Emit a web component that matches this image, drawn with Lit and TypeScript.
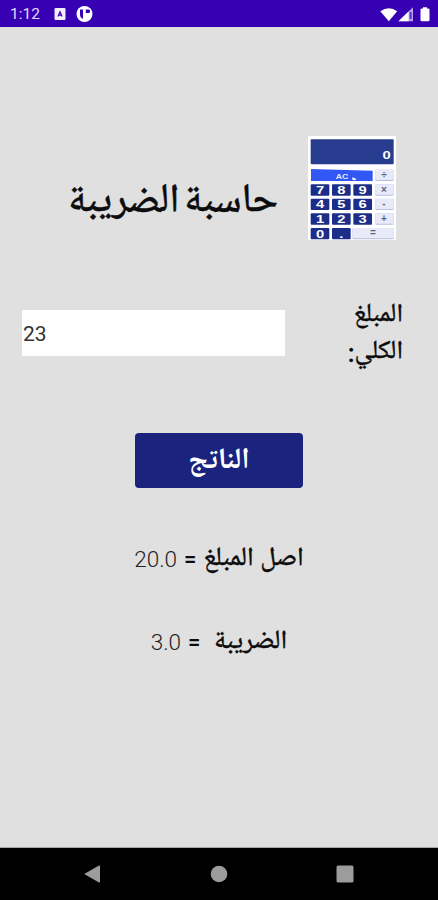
import { LitElement, html, svg, css } from "lit";
import { customElement, state } from "lit/decorators.js";

@customElement("status-bar")
class StatusBar extends LitElement {
  static styles = css`
    :host {
      display: flex;
      align-items: center;
      height: 27px;
      box-sizing: border-box;
      padding: 1px 6px 0 10px;
      background: #3700b3;
      color: #e6dcfa;
      font: 400 15.5px/27px Roboto, sans-serif;
    }
    .time { width: 44px; }
    .left { display: block; }
    .right { display: block; margin-left: auto; }
  `;
  render() {
    return html`
      <span class="time">1:12</span>
      <svg class="left" width="40" height="18" viewBox="0 0 40 18">
        <rect x="0.5" y="3" width="11" height="12" rx="1" fill="#f3eefc" />
        <path d="M4 11.4 6 6.8 8 11.4M4.6 10.2h2.8" fill="none" stroke="#3700b3" stroke-width="1.2" />
        <circle cx="30.5" cy="9" r="8" fill="#fff" />
        <path d="M26 4.4h3v9.4q-3-1-3-4.6z" fill="#3700b3" />
        <path d="M31.8 4.4h3.2q1 .3 1 1.8t-1 1.8h-3.2z" fill="#3700b3" />
      </svg>
      <svg class="right" width="52" height="18" viewBox="0 0 52 18">
        <path d="M.3 6.2Q9 .2 17.2 6.2L8.8 16.2z" fill="#fff" />
        <path d="M18.5 16.2 33 2.2v14z" fill="#b9a3ea" />
        <path d="M18.5 16.2 28.6 6.5v9.7z" fill="#fff" />
        <path d="M29.6 7h2v7h-2z" fill="#5b30c4" />
        <path d="M40.5 4.8q0-1.2 1.2-1.2H43V2.2h4v1.4h1.3q1.2 0 1.2 1.2v10.4q0 1-1.2 1h-6.6q-1.2 0-1.2-1z" fill="#fff" />
      </svg>
    `;
  }
}

@customElement("calculator-logo")
class CalculatorLogo extends LitElement {
  static styles = css`
    :host { display: block; }
    svg { display: block; }
    text { font-family: "Liberation Sans", sans-serif; font-weight: 700; text-anchor: middle; }
    .paper { fill: #fff; }
    .screen { fill: #273b8f; }
    .clear { fill: #3157f5; }
    .key { fill: #1d2e88; }
    .soft { fill: #e8eafa; }
    .edge { fill: #b9bdde; }
    .digit { fill: #fff; font-size: 34px; }
    .small { fill: #e4eaff; font-size: 23px; }
    .op { fill: #60657e; font-size: 30px; }
  `;
  private key(label: string, col: number, row: number) {
    const x = [46, 110, 174][col];
    const y = [178, 221, 265, 309][row];
    const cx = x + 28;
    return svg`
      <rect class="key" x=${x} y=${y} width="56" height="34" rx="3" />
      <text class="digit" transform="translate(${cx} ${y + 29}) scale(1.3 1)">${label}</text>
    `;
  }
  private op(label: string, y: number) {
    return svg`
      <rect class="edge" x="240" y=${y} width="55" height="34" rx="3" />
      <rect class="soft" x="240" y=${y} width="55" height="31" rx="3" />
      <text class="op" x="266" y=${y + 26}>${label}</text>
    `;
  }
  render() {
    const rows = ["789", "456", "123", "0."];
    return html`
      <svg width="88" height="104" viewBox="38 33 264 312">
        <rect class="paper" x="38" y="33" width="264" height="312" />
        <rect class="screen" x="46" y="43" width="249" height="75" rx="3" />
        <text class="digit" transform="translate(274 101) scale(1.3 1)">0</text>
        <path class="clear" d="M47 132 232 137V168H47z" />
        <text class="small" transform="translate(140 161) scale(1.15 1)">AC</text>
        <path d="m171 157 11 4-1 5-10-2z" fill="#fff" />
        ${rows.map((r, i) => [...r].map((k, j) => this.key(k, j, i)))}
        ${["÷", "×", "-", "+"].map((o, i) => this.op(o, [134, 178, 221, 265][i]))}
        <rect class="edge" x="171" y="309" width="124" height="34" rx="3" />
        <rect class="soft" x="171" y="309" width="124" height="31" rx="3" />
        <text class="op" x="233" y="333">=</text>
      </svg>
    `;
  }
}

@customElement("nav-bar")
class NavBar extends LitElement {
  static styles = css`
    :host {
      display: grid;
      grid-template-columns: repeat(3, 126px);
      justify-content: center;
      place-items: center;
      height: 52px;
      background: #000;
    }
    svg { display: block; fill: #9c9c9c; }
  `;
  render() {
    return html`
      <svg width="18" height="18"><path d="M.2 9 15 .6q1-.5 1 .6v15.6q0 1.1-1 .6z" /></svg>
      <svg width="18" height="18"><circle cx="9" cy="9" r="8.3" /></svg>
      <svg width="18" height="18"><rect x=".5" y=".5" width="17" height="17" rx="1.5" /></svg>
    `;
  }
}

@customElement("app-root")
class AppRoot extends LitElement {
  static styles = css`
    :host {
      display: flex;
      flex-direction: column;
      height: 900px;
      background: #e0e0e0;
      color: #0c0c0c;
      font-family: Roboto, "Noto Naskh Arabic UI", "Noto Naskh Arabic", "DejaVu Sans", sans-serif;
    }
    main { flex: 1; display: flex; flex-direction: column; align-items: center; border-bottom: 1px solid #a8a8a8; }
    .head {
      display: flex;
      direction: rtl;
      align-items: center;
      align-self: stretch;
      height: 104px;
      margin-top: 109px;
      padding-right: 42px;
      gap: 30px;
    }
    h1 {
      margin: 32px 0 0;
      font-size: 40.3px;
      font-weight: 500;
      white-space: nowrap;
      line-height: 60px;
      word-spacing: -6px;
      -webkit-text-stroke: 0.4px currentColor;
    }
    .amount {
      display: flex;
      direction: rtl;
      align-items: center;
      justify-content: space-between;
      align-self: stretch;
      height: 74px;
      margin-top: 56px;
      padding: 0 35px 0 22px;
    }
    .label {
      width: 70px;
      padding-top: 4px;
      font-size: 26px;
      font-weight: 500;
      line-height: 37px;
      -webkit-text-stroke: 0.3px currentColor;
    }
    input {
      width: 263px;
      height: 46px;
      box-sizing: border-box;
      border: 0;
      border-radius: 0;
      padding: 2px 1px 0;
      background: #fff;
      color: #333;
      direction: ltr;
      font: 400 21px Roboto, sans-serif;
    }
    button {
      width: 168px;
      height: 55px;
      margin-top: 63px;
      padding: 4px 0 0;
      border: 0;
      border-radius: 4px;
      background: #1a237e;
      color: #fff;
      font: inherit;
      font-size: 29.5px;
      line-height: 51px;
      font-weight: 700;
    }
    .result {
      direction: rtl;
      display: flex;
      align-items: baseline;
      height: 40px;
      line-height: 40px;
      font-size: 22px;
      font-weight: 500;
      gap: 7px;
      white-space: nowrap;
    }
    .name { font-size: 26.5px; transform: translateY(2px); -webkit-text-stroke: 0.3px currentColor; }
    .first { margin-top: 50px; }
    .second { margin-top: 43px; }
    .second .name { margin-left: 6px; }
    .num { font-weight: 300; color: #222; font-size: 22.5px; }
  `;
  @state() private amount = "23";
  render() {
    return html`
      <status-bar></status-bar>
      <main>
        <div class="head">
          <calculator-logo></calculator-logo>
          <h1>حاسبة الضريبة</h1>
        </div>
        <div class="amount">
          <div class="label">المبلغ الكلي:</div>
          <input .value=${this.amount} />
        </div>
        <button>الناتج</button>
        <div class="result first">
          <span class="name">اصل المبلغ</span><span>=</span><span class="num">20.0</span>
        </div>
        <div class="result second">
          <span class="name">الضريبة</span><span>=</span><span class="num">3.0</span>
        </div>
      </main>
      <nav-bar></nav-bar>
    `;
  }
}
